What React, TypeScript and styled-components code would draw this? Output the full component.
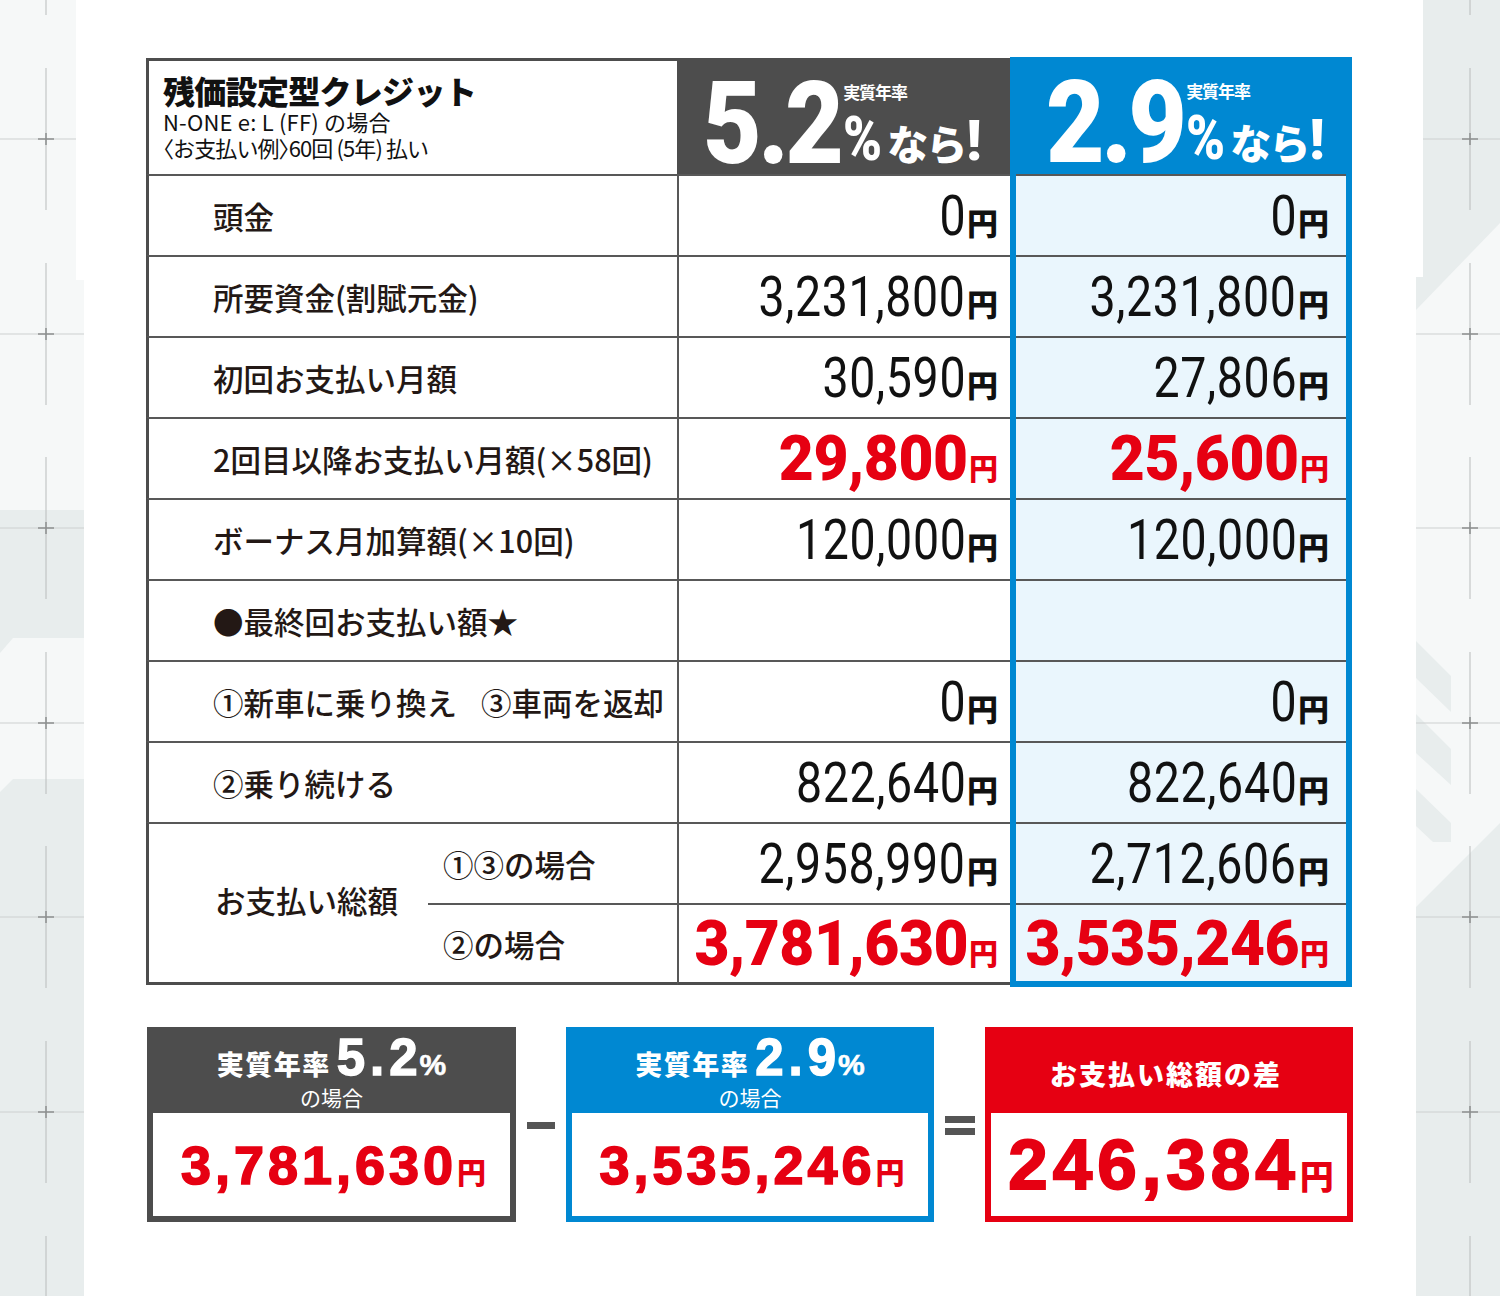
import React from 'react';
import styled, { createGlobalStyle } from 'styled-components';

const GREY = '#4d4d4d';
const LINE = '#585858';
const BLUE = '#0088d2';
const RED = '#e60012';
const PALE = '#eaf6fd';
const INK = '#231815';
const JA = '"Noto Sans CJK JP", "Noto Sans", sans-serif';
const NUM = 'Roboto, "Noto Sans", sans-serif';
const WIDE = '"Liberation Sans", Arial, sans-serif';

const Global = createGlobalStyle`
  html, body { margin: 0; padding: 0; background: #fff; }
  body { font-family: ${JA}; color: ${INK}; }
`;

const Page = styled.div`
  display: grid;
  grid-template-columns: 84px 1fr 84px;
  width: 1500px;
  height: 1296px;
  overflow: hidden;
  background: #fff;
`;

const Strip = styled.svg`
  display: block;
`;

const Main = styled.main`
  padding: 57px 0 0 62px;
`;

const Table = styled.div`
  display: grid;
  grid-template-columns: 282px 249px 333px 342px;
  grid-template-rows: 117px repeat(9, 81px) 84px;
  width: 1206px;
`;

const HeadLabel = styled.div`
  grid-column: 1 / 3;
  margin-top: 1px;
  border-top: 3px solid ${GREY};
  border-left: 3px solid ${GREY};
  padding: 11px 0 0 14px;
  background: #fff;
  display: flex;
  flex-direction: column;
`;

const Title = styled.div`
  font-size: 32px;
  font-weight: 900;
  line-height: 36px;
  letter-spacing: -0.7px;
  color: #111;
`;

const SubLine = styled.div<{ $tight?: boolean }>`
  font-size: 22px;
  font-weight: 400;
  line-height: 26px;
  color: #111;
  white-space: nowrap;
  letter-spacing: ${(p) => (p.$tight ? '-0.9px' : '0.2px')};
  font-feature-settings: ${(p) => (p.$tight ? '"halt"' : 'normal')};
`;

const HeadRate = styled.div<{ $tone: string; $pad: number; $top: number }>`
  background: ${(p) => p.$tone};
  margin-top: ${(p) => p.$top}px;
  display: flex;
  align-items: flex-start;
  padding-left: ${(p) => p.$pad}px;
`;

const BigRate = styled.span`
  display: inline-block;
  font-family: ${NUM};
  font-weight: 900;
  font-size: 115px;
  line-height: 115px;
  letter-spacing: -4px;
  color: #fff;
  transform: scaleX(0.88);
  transform-origin: left center;
  margin-top: 8px;
  margin-right: -16px;
  white-space: nowrap;
`;

const RateSide = styled.div`
  display: flex;
  flex-direction: column;
  padding-top: 25px;
  color: #fff;
`;

const RateCaption = styled.span`
  font-size: 17px;
  font-weight: 700;
  line-height: 18px;
  letter-spacing: -1px;
  white-space: nowrap;
`;

const RateSuffix = styled.div`
  margin-top: 14px;
  height: 48px;
  line-height: 48px;
  white-space: nowrap;
  display: flex;
  align-items: baseline;
`;

const Pct = styled.span`
  display: inline-block;
  font-family: ${NUM};
  font-weight: 900;
  font-size: 62px;
  margin-right: -2px;
  transform: scaleX(0.85);
  transform-origin: left center;
`;

const Nara = styled.span`
  font-family: ${JA};
  font-weight: 900;
  font-size: 41px;
  letter-spacing: -2px;
`;

const Bang = styled.span`
  font-family: ${NUM};
  font-weight: 900;
  font-size: 56px;
  margin-left: 1px;
`;

const LabelCell = styled.div<{ $last?: boolean }>`
  grid-column: 1 / 3;
  display: flex;
  align-items: center;
  padding-left: 64px;
  border-left: 3px solid ${GREY};
  border-top: 2px solid ${LINE};
  border-bottom: ${(p) => (p.$last ? `3px solid ${GREY}` : 'none')};
  margin-bottom: ${(p) => (p.$last ? '2px' : '0')};
  font-size: 30.5px;
  font-weight: 500;
  white-space: nowrap;
  background: #fff;
`;

const TotalLabel = styled(LabelCell)`
  grid-column: 1;
  grid-row: span 2;
  padding-left: 66px;
  padding-bottom: 6px;
  border-bottom: 3px solid ${GREY};
  margin-bottom: 2px;
`;

const SubLabel = styled.div<{ $last?: boolean }>`
  grid-column: 2;
  display: flex;
  align-items: center;
  padding-left: 15px;
  border-top: 2px solid ${LINE};
  border-bottom: ${(p) => (p.$last ? `3px solid ${GREY}` : 'none')};
  margin-bottom: ${(p) => (p.$last ? '2px' : '0')};
  font-size: 30.5px;
  font-weight: 500;
  white-space: nowrap;
  background: #fff;
`;

const Gap = styled.span`
  display: inline-block;
  width: 24px;
`;

const MidCell = styled.div<{ $last?: boolean }>`
  display: flex;
  align-items: center;
  justify-content: flex-end;
  padding-right: 12px;
  border-left: 2px solid ${LINE};
  border-top: 2px solid ${LINE};
  border-bottom: ${(p) => (p.$last ? `3px solid ${GREY}` : 'none')};
  margin-bottom: ${(p) => (p.$last ? '2px' : '0')};
  background: #fff;
`;

const BlueCell = styled.div<{ $last?: boolean }>`
  display: flex;
  align-items: center;
  justify-content: flex-end;
  padding: 2px 17px 0 0;
  border-left: 6px solid ${BLUE};
  border-right: 6px solid ${BLUE};
  border-bottom: ${(p) => (p.$last ? `6px solid ${BLUE}` : 'none')};
  background: linear-gradient(${LINE}, ${LINE}) top / 100% 2px no-repeat, ${PALE};
`;

const ValueGroup = styled.span`
  display: flex;
  align-items: baseline;
  white-space: nowrap;
`;

const Num = styled.span<{ $red?: boolean }>`
  display: inline-block;
  font-family: ${NUM};
  font-weight: ${(p) => (p.$red ? 900 : 400)};
  font-size: ${(p) => (p.$red ? 63 : 56)}px;
  line-height: 1;
  color: ${(p) => (p.$red ? RED : '#111')};
  letter-spacing: ${(p) => (p.$red ? '-0.5px' : '0.8px')};
  transform: scaleX(${(p) => (p.$red ? 0.96 : 0.83)});
  transform-origin: right center;
`;

const Yen = styled.span<{ $red?: boolean }>`
  font-family: ${JA};
  font-weight: 900;
  font-size: ${(p) => (p.$red ? 29 : 31)}px;
  line-height: 1;
  color: ${(p) => (p.$red ? RED : '#111')};
  margin-left: 1px;
`;

const BoxRow = styled.div`
  display: grid;
  grid-template-columns: 369px 50px 368px 51px 368px;
  height: 195px;
  margin-top: 40px;
  width: 1206px;
  padding-left: 1px;
`;

const SumBox = styled.div<{ $tone: string }>`
  display: flex;
  flex-direction: column;
  background: ${(p) => p.$tone};
  padding: 0 6px 6px;
`;

const SumHead = styled.div<{ $shift?: number }>`
  height: 86px;
  display: flex;
  flex-direction: column;
  align-items: center;
  justify-content: center;
  color: #fff;
  padding-top: ${(p) => p.$shift ?? 0}px;
  box-sizing: border-box;
`;

const HeadLine = styled.div`
  display: flex;
  align-items: baseline;
  white-space: nowrap;
  line-height: 1;
`;

const HeadJa = styled.span<{ $space?: number }>`
  font-family: ${JA};
  font-weight: 900;
  font-size: 27px;
  letter-spacing: ${(p) => p.$space ?? 1.5}px;
  margin-right: 6px;
`;

const HeadNum = styled.span`
  font-family: ${WIDE};
  font-weight: 700;
  font-size: 51px;
  letter-spacing: 5px;
  -webkit-text-stroke: 1.4px #fff;
`;

const HeadPct = styled.span`
  font-family: ${WIDE};
  font-weight: 700;
  font-size: 30px;
  margin-left: -3px;
  -webkit-text-stroke: 0.6px #fff;
`;

const HeadSub = styled.div`
  font-family: ${JA};
  font-weight: 400;
  font-size: 21px;
  line-height: 1;
  margin-top: 4px;
`;

const SumBody = styled.div`
  flex: 1;
  background: #fff;
  display: flex;
  align-items: center;
  justify-content: center;
  padding-left: 4px;
`;

const SumNum = styled.span<{ $big?: boolean }>`
  font-family: ${WIDE};
  font-weight: 700;
  font-size: ${(p) => (p.$big ? 71 : 54)}px;
  letter-spacing: ${(p) => (p.$big ? 5 : 4)}px;
  line-height: 1;
  color: ${RED};
  -webkit-text-stroke: ${(p) => (p.$big ? 2 : 1.6)}px ${RED};
`;

const SumYen = styled.span<{ $big?: boolean }>`
  font-family: ${JA};
  font-weight: 900;
  font-size: ${(p) => (p.$big ? 34 : 29)}px;
  line-height: 1;
  color: ${RED};
`;

const SumValue = styled.div`
  display: flex;
  align-items: baseline;
  white-space: nowrap;
`;

const Operator = styled.div`
  display: flex;
  flex-direction: column;
  align-items: center;
  justify-content: center;
  gap: 5px;
  padding-top: 2px;
`;

const Bar = styled.div<{ $w: number }>`
  width: ${(p) => p.$w}px;
  height: 7px;
  background: #555;
`;

type Row = { label: React.ReactNode; key: string; a?: string; b?: string; red?: boolean };

const rows: Row[] = [
  { key: 'r1', label: '頭金', a: '0', b: '0' },
  { key: 'r2', label: '所要資金(割賦元金)', a: '3,231,800', b: '3,231,800' },
  { key: 'r3', label: '初回お支払い月額', a: '30,590', b: '27,806' },
  { key: 'r4', label: '2回目以降お支払い月額(×58回)', a: '29,800', b: '25,600', red: true },
  { key: 'r5', label: 'ボーナス月加算額(×10回)', a: '120,000', b: '120,000' },
  { key: 'r6', label: '●最終回お支払い額★' },
  {
    key: 'r7',
    label: (
      <>
        ①新車に乗り換え<Gap />③車両を返却
      </>
    ),
    a: '0',
    b: '0',
  },
  { key: 'r8', label: '②乗り続ける', a: '822,640', b: '822,640' },
];

const Amount = ({ v, red }: { v?: string; red?: boolean }) =>
  v ? (
    <ValueGroup>
      <Num $red={red}>{v}</Num>
      <Yen $red={red}>円</Yen>
    </ValueGroup>
  ) : null;

const CROSSES = [-56, 139, 334, 528, 723, 917, 1112, 1307];

const Marks = ({ x, w }: { x: number; w: number }) => (
  <>
    {CROSSES.map((c) => (
      <g key={c}>
        <line x1={0} x2={w} y1={c} y2={c} stroke="#cdd0d0" strokeWidth={1} />
        <line x1={x} x2={x} y1={c - 71} y2={c + 71} stroke="#b9bcbc" strokeWidth={1} />
        <line x1={x - 8} x2={x + 8} y1={c} y2={c} stroke="#8d8f8f" strokeWidth={1.5} />
        <line x1={x} x2={x} y1={c - 6} y2={c + 6} stroke="#8d8f8f" strokeWidth={1.5} />
      </g>
    ))}
  </>
);

const LeftDecor = () => (
  <Strip width={84} height={1296} viewBox="0 0 84 1296">
    <rect width={84} height={1296} fill="#f6f8f8" />
    <polygon points="0,510 84,510 84,638 13,638 0,653" fill="#e8eded" />
    <polygon points="0,792 13,779 84,779 84,1296 0,1296" fill="#e8eded" />
    <Marks x={46} w={84} />
    <rect x={76} y={0} width={8} height={280} fill="#fff" />
  </Strip>
);

const RightDecor = () => (
  <Strip width={84} height={1296} viewBox="0 0 84 1296">
    <rect width={84} height={1296} fill="#f6f8f8" />
    <polygon points="0,0 84,0 84,223 0,310" fill="#e8eded" />
    <polygon points="0,641 35,676 35,712 0,678" fill="#e8eded" />
    <polygon points="0,714 35,749 35,785 0,753" fill="#e8eded" />
    <polygon points="0,789 35,823 35,842 17,842 0,826" fill="#e8eded" />
    <polygon points="0,907 84,823 84,1296 0,1296" fill="#e8eded" />
    <Marks x={54} w={84} />
    <rect x={0} y={0} width={7} height={277} fill="#fff" />
  </Strip>
);

const RateHeader = ({ rate, tone, pad, top }: { rate: string; tone: string; pad: number; top: number }) => (
  <HeadRate $tone={tone} $pad={pad} $top={top}>
    <BigRate>{rate}</BigRate>
    <RateSide>
      <RateCaption>実質年率</RateCaption>
      <RateSuffix>
        <Pct>%</Pct>
        <Nara>なら</Nara>
        <Bang>!</Bang>
      </RateSuffix>
    </RateSide>
  </HeadRate>
);

const RateBox = ({ rate, tone, value }: { rate: string; tone: string; value: string }) => (
  <SumBox $tone={tone}>
    <SumHead>
      <HeadLine>
        <HeadJa>実質年率</HeadJa>
        <HeadNum>{rate}</HeadNum>
        <HeadPct>%</HeadPct>
      </HeadLine>
      <HeadSub>の場合</HeadSub>
    </SumHead>
    <SumBody>
      <SumValue>
        <SumNum>{value}</SumNum>
        <SumYen>円</SumYen>
      </SumValue>
    </SumBody>
  </SumBox>
);

export default function App() {
  return (
    <>
      <Global />
      <Page>
        <LeftDecor />
        <Main>
          <Table>
            <HeadLabel>
              <Title>残価設定型クレジット</Title>
              <SubLine>N-ONE e: L (FF) の場合</SubLine>
              <SubLine $tight>〈お支払い例〉60回 (5年) 払い</SubLine>
            </HeadLabel>
            <RateHeader rate="5.2" tone={GREY} pad={26} top={1} />
            <RateHeader rate="2.9" tone={BLUE} pad={36} top={0} />

            {rows.map((r) => (
              <React.Fragment key={r.key}>
                <LabelCell>{r.label}</LabelCell>
                <MidCell>
                  <Amount v={r.a} red={r.red} />
                </MidCell>
                <BlueCell>
                  <Amount v={r.b} red={r.red} />
                </BlueCell>
              </React.Fragment>
            ))}

            <TotalLabel>お支払い総額</TotalLabel>
            <SubLabel>①③の場合</SubLabel>
            <MidCell>
              <Amount v="2,958,990" />
            </MidCell>
            <BlueCell>
              <Amount v="2,712,606" />
            </BlueCell>
            <SubLabel $last>②の場合</SubLabel>
            <MidCell $last>
              <Amount v="3,781,630" red />
            </MidCell>
            <BlueCell $last>
              <Amount v="3,535,246" red />
            </BlueCell>
          </Table>

          <BoxRow>
            <RateBox rate="5.2" tone={GREY} value="3,781,630" />
            <Operator>
              <Bar $w={28} />
            </Operator>
            <RateBox rate="2.9" tone={BLUE} value="3,535,246" />
            <Operator>
              <Bar $w={30} />
              <Bar $w={30} />
            </Operator>
            <SumBox $tone={RED}>
              <SumHead $shift={6}>
                <HeadLine>
                  <HeadJa $space={2}>お支払い総額の差</HeadJa>
                </HeadLine>
              </SumHead>
              <SumBody>
                <SumValue>
                  <SumNum $big>246,384</SumNum>
                  <SumYen $big>円</SumYen>
                </SumValue>
              </SumBody>
            </SumBox>
          </BoxRow>
        </Main>
        <RightDecor />
      </Page>
    </>
  );
}
